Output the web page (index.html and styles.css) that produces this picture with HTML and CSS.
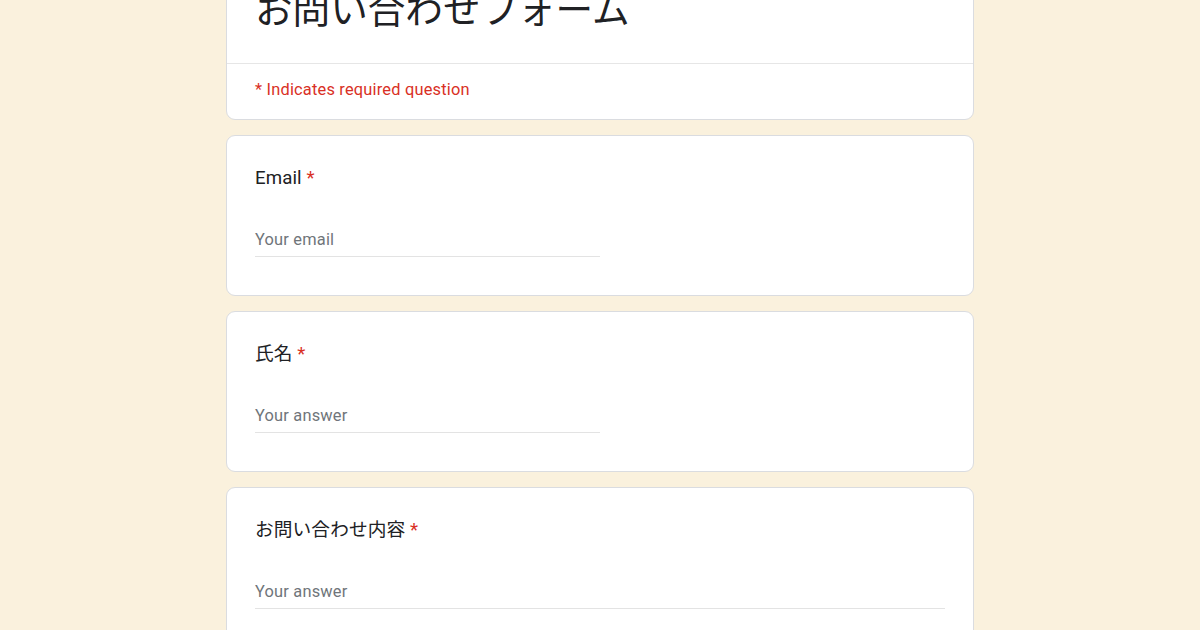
FILE: index.html
```html
<!DOCTYPE html>
<html lang="ja">
<head>
<meta charset="utf-8">
<title>お問い合わせフォーム</title>
<link rel="stylesheet" href="styles.css">
</head>
<body>
<main class="form">
  <section class="card header-card">
    <div class="title-area">
      <h1 class="form-title">お問い合わせフォーム</h1>
    </div>
    <div class="required-note">* Indicates required question</div>
  </section>

  <section class="card question">
    <div class="q-title">Email <span class="req">*</span></div>
    <div class="input short"><span class="placeholder">Your email</span></div>
  </section>

  <section class="card question">
    <div class="q-title">氏名 <span class="req">*</span></div>
    <div class="input short"><span class="placeholder">Your answer</span></div>
  </section>

  <section class="card question">
    <div class="q-title">お問い合わせ内容 <span class="req">*</span></div>
    <div class="input long"><span class="placeholder">Your answer</span></div>
  </section>
</main>
</body>
</html>
```

FILE: styles.css
```css
html, body {
  margin: 0;
  padding: 0;
}

body {
  background: #faf1dd;
  font-family: Roboto, "Noto Sans CJK JP", sans-serif;
  color: #202124;
  height: 630px;
  overflow: hidden;
}

.form {
  width: 748px;
  margin: -44px auto 0;
  display: flex;
  flex-direction: column;
  gap: 15px;
}

.card {
  background: #ffffff;
  border: 1px solid #dadce0;
  border-radius: 9px;
}

.title-area {
  padding: 28px 28px 34px;
  border-bottom: 1px solid #e6e6e6;
}

.form-title {
  margin: 0;
  font-family: "Noto Sans CJK JP", sans-serif;
  font-weight: 400;
  font-size: 37.6px;
  line-height: 44px;
  color: #202124;
}

.required-note {
  padding: 14px 28px 17px;
  font-size: 16.4px;
  line-height: 24px;
  color: #d93025;
  letter-spacing: 0.2px;
}

.question {
  padding: 28px 28px 38px;
  display: flex;
  flex-direction: column;
  gap: 36px;
}

.q-title {
  font-family: Roboto, "Noto Sans CJK JP", sans-serif;
  font-size: 18.7px;
  line-height: 28px;
  color: #202124;
  letter-spacing: 0.1px;
}

.req {
  color: #d93025;
}

.input {
  border-bottom: 1px solid #e3e3e3;
  padding-bottom: 4px;
}

.input.short {
  width: 345px;
}

.input.long {
  width: 100%;
}

.placeholder {
  display: block;
  font-size: 16.4px;
  line-height: 24px;
  color: #70757a;
  letter-spacing: 0.2px;
}
```
